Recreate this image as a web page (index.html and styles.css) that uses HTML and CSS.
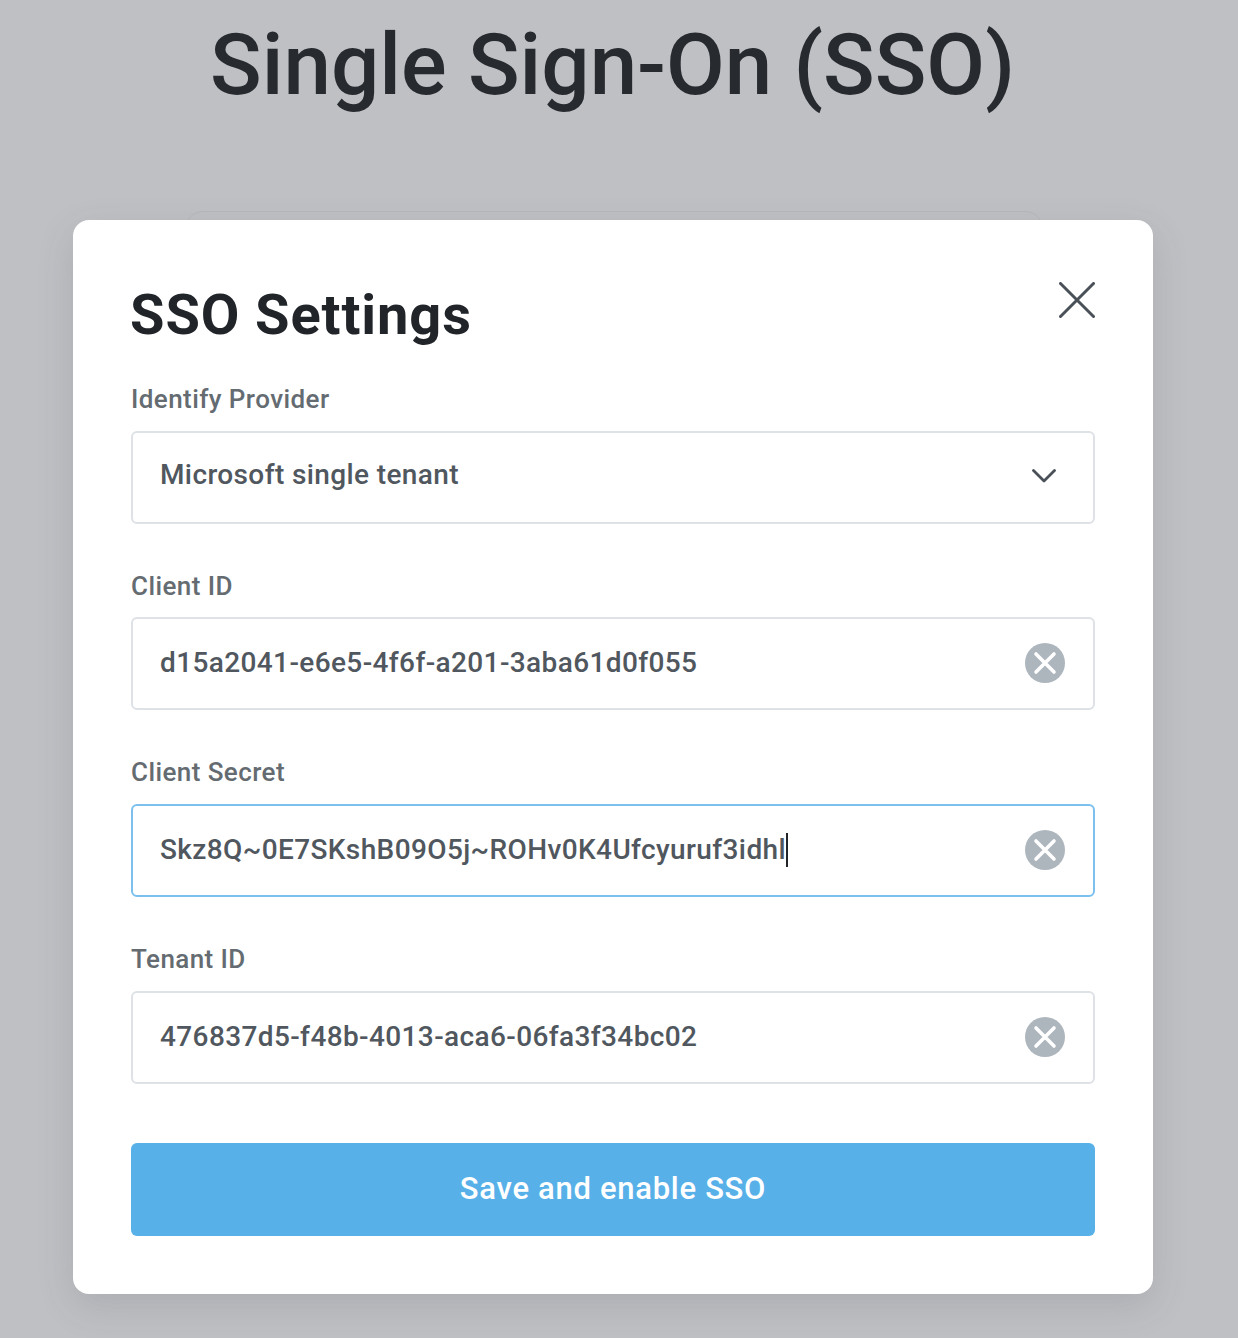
FILE: index.html
```html
<!DOCTYPE html>
<html lang="en">
<head>
<meta charset="utf-8">
<title>Single Sign-On (SSO)</title>
<link rel="stylesheet" href="styles.css">
</head>
<body>
<main class="page">
  <h1 class="page-title">Single Sign-On (SSO)</h1>
  <div class="back-card"></div>
</main>
<section class="modal">
  <header class="modal-head">
    <h2 class="modal-title">SSO Settings</h2>
    <svg class="close" viewBox="0 0 36 36" aria-hidden="true"><path d="M1.5 1.5 34.5 34.5M34.5 1.5 1.5 34.5"/></svg>
  </header>
  <div class="field">
    <div class="label">Identify Provider</div>
    <div class="box">
      <span class="value select-value">Microsoft single tenant</span>
      <svg class="chevron" viewBox="0 0 24 14" aria-hidden="true"><path d="M1.5 1.5 12 12 22.5 1.5"/></svg>
    </div>
  </div>
  <div class="field">
    <div class="label">Client ID</div>
    <div class="box">
      <span class="value">d15a2041-e6e5-4f6f-a201-3aba61d0f055</span>
      <svg class="clear" viewBox="0 0 40 40" aria-hidden="true"><circle cx="20" cy="20" r="20"/><path d="M11 11 29 29M29 11 11 29"/></svg>
    </div>
  </div>
  <div class="field">
    <div class="label">Client Secret</div>
    <div class="box focused">
      <span class="value">Skz8Q~0E7SKshB09O5j~ROHv0K4Ufcyuruf3idhl<span class="caret"></span></span>
      <svg class="clear" viewBox="0 0 40 40" aria-hidden="true"><circle cx="20" cy="20" r="20"/><path d="M11 11 29 29M29 11 11 29"/></svg>
    </div>
  </div>
  <div class="field">
    <div class="label">Tenant ID</div>
    <div class="box">
      <span class="value">476837d5-f48b-4013-aca6-06fa3f34bc02</span>
      <svg class="clear" viewBox="0 0 40 40" aria-hidden="true"><circle cx="20" cy="20" r="20"/><path d="M11 11 29 29M29 11 11 29"/></svg>
    </div>
  </div>
  <button class="save" type="button">Save and enable SSO</button>
</section>
</body>
</html>
```
FILE: styles.css
```css
* { box-sizing: border-box; }
html, body { margin: 0; height: 1338px; overflow: hidden; }
body {
  background: #bfc0c4;
  font-family: Roboto, "Liberation Sans", sans-serif;
  color: #212529;
}
.page { display: flex; flex-direction: column; align-items: center; }
.page-title {
  margin: 18px 0 0 -13px;
  font-size: 85.3px;
  line-height: 94px;
  font-weight: 500;
  color: #272a2f;
}
.back-card {
  margin: 99px 0 0 -10px;
  width: 858px;
  height: 300px;
  border: 1px solid #b6b7bb;
  border-radius: 18px;
}
.modal {
  position: absolute;
  left: 73px;
  top: 220px;
  width: 1080px;
  height: 1074px;
  padding: 58px 58px 0;
  background: #fff;
  border-radius: 16px;
  box-shadow: 0 12px 36px rgba(70, 72, 80, 0.16);
}
.modal-head {
  display: flex;
  justify-content: space-between;
  align-items: flex-start;
  height: 95px;
}
.modal-title {
  margin: 6px 0 0 -1px;
  font-size: 56px;
  line-height: 62px;
  font-weight: 700;
  letter-spacing: 0.9px;
  color: #212529;
}
.close {
  width: 36px;
  height: 36px;
  margin-top: 4px;
  fill: none;
  stroke: #495057;
  stroke-width: 3;
  stroke-linecap: round;
}
.field { height: 186.67px; }
.label {
  height: 57.8px;
  padding-top: 10px;
  font-size: 26px;
  line-height: 32px;
  font-weight: 500;
  letter-spacing: 0.42px;
  color: #646b71;
}
.box {
  display: flex;
  align-items: center;
  justify-content: space-between;
  height: 93px;
  padding: 0 28px 0 27px;
  border: 2px solid #dee2e6;
  border-radius: 6px;
}
.box.focused { border-color: #7cc0ee; }
.value {
  display: flex;
  align-items: center;
  padding-bottom: 1px;
  font-size: 28px;
  line-height: 34px;
  font-weight: 500;
  letter-spacing: 0.38px;
  color: #50575e;
}
.select-value { padding-bottom: 5px; }
.caret {
  width: 2px;
  height: 34px;
  background: #212529;
}
.chevron {
  width: 24px;
  height: 14px;
  margin: 0 9px 2px 0;
  fill: none;
  stroke: #495057;
  stroke-width: 2.8;
  stroke-linecap: round;
  stroke-linejoin: round;
}
.clear { width: 40px; height: 40px; margin-bottom: 1px; }
.clear circle { fill: #adb5bd; }
.clear path {
  fill: none;
  stroke: #fff;
  stroke-width: 3.6;
  stroke-linecap: round;
}
.save {
  display: block;
  width: 100%;
  height: 93px;
  margin-top: 23px;
  border: 0;
  border-radius: 6px;
  background: #58b0e8;
  color: #fff;
  font: 500 31px/36px Roboto, "Liberation Sans", sans-serif;
  letter-spacing: 0.7px;
}
```
